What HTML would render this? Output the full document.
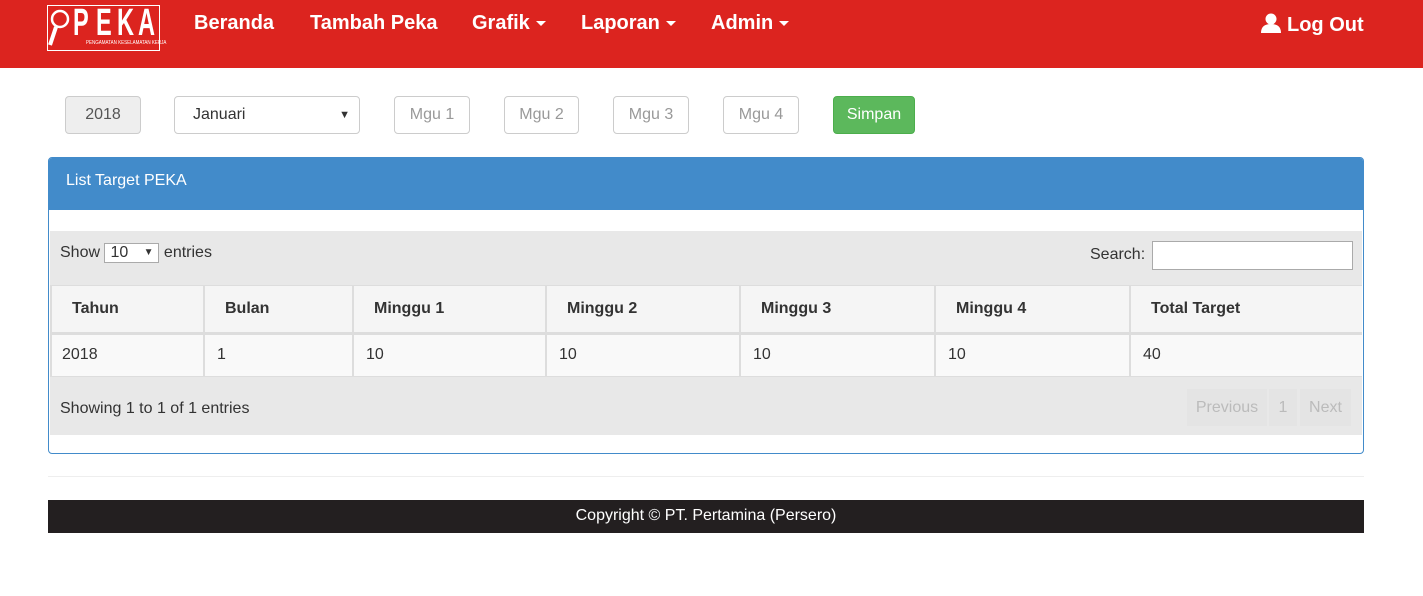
<!DOCTYPE html>
<html><head><meta charset="utf-8">
<style>
*{box-sizing:border-box;margin:0;padding:0}
body{width:1423px;height:596px;background:#fff;font-family:"Liberation Sans",Arial,sans-serif;font-size:16px;color:#333;position:relative;overflow:hidden}
.a{position:absolute}
.nav{left:0;top:0;width:1423px;height:68px;background:#dc241f}
.nl{color:#fff;font-weight:bold;font-size:20px;top:12px}
.car{display:inline-block;width:0;height:0;border-left:5px solid transparent;border-right:5px solid transparent;border-top:5px solid #fff;vertical-align:middle;margin-left:6px}
.in{height:38px;border:1px solid #ccc;border-radius:4px;font-size:16px;line-height:36px;color:#999;text-align:center;top:96px}
.grey{background:#e8e8e8}
.th{top:286px;height:46px;background:#f5f5f5;border-right:2px solid #ddd;font-weight:bold;line-height:46px;padding-left:20px}
.td{top:335px;height:41px;background:#f9f9f9;border-right:2px solid #ddd;line-height:40px;padding-left:12px}
.L{position:absolute;top:5px;color:#fff;font-weight:bold;font-size:38px;line-height:36px;transform:scaleX(.62);transform-origin:left}
</style></head><body>
<div class="a nav"></div>
<div class="a" style="left:47px;top:5px;width:113px;height:46px;border:1px solid #fff"></div>
<svg class="a" style="left:46px;top:8px" width="26" height="40" viewBox="0 0 26 40"><circle cx="14" cy="11" r="8" fill="none" stroke="#fff" stroke-width="2.5"/><line x1="10" y1="19" x2="4" y2="37" stroke="#fff" stroke-width="4"/></svg>
<span class="L" style="left:73px">P</span>
<span class="L" style="left:96px">E</span>
<span class="L" style="left:117px">K</span>
<span class="L" style="left:138px">A</span>
<div class="a" style="left:86px;top:40px;color:#fff;font-size:5px;white-space:nowrap;transform:scaleX(.9);transform-origin:left">PENGAMATAN KESELAMATAN KERJA</div>
<div class="a nl" style="left:194px">Beranda</div>
<div class="a nl" style="left:310px">Tambah Peka</div>
<div class="a nl" style="left:472px">Grafik<span class="car"></span></div>
<div class="a nl" style="left:581px">Laporan<span class="car"></span></div>
<div class="a nl" style="left:711px">Admin<span class="car"></span></div>
<svg class="a" style="left:1260px;top:13px" width="22" height="20" viewBox="0 0 22 20"><circle cx="11" cy="6" r="5.5" fill="#fff"/><path d="M1 20 Q1 11 11 11 Q21 11 21 20Z" fill="#fff"/></svg>
<div class="a nl" style="left:1287px;top:14px">Log Out</div>

<div class="a in" style="left:65px;width:76px;background:#eee;color:#555">2018</div>
<div class="a in" style="left:174px;width:186px;color:#333;text-align:left;padding-left:18px">Januari<span style="position:absolute;right:9px;font-size:11px">▼</span></div>
<div class="a in" style="left:394px;width:76px">Mgu 1</div>
<div class="a in" style="left:504px;width:75px">Mgu 2</div>
<div class="a in" style="left:613px;width:76px">Mgu 3</div>
<div class="a in" style="left:723px;width:76px">Mgu 4</div>
<div class="a in" style="left:833px;width:82px;background:#5cb85c;border-color:#4cae4c;color:#fff">Simpan</div>

<div class="a" style="left:48px;top:157px;width:1316px;height:297px;border:1px solid #428bca;border-radius:4px;overflow:hidden">
<div style="height:52px;background:#428bca;color:#fff;padding:14px 17px;font-size:16px">List Target PEKA</div></div>
<div class="a grey" style="left:50px;top:231px;width:1312px;height:204px"></div>
<div class="a" style="left:60px;top:243px">Show <span style="display:inline-block;width:55px;height:20px;border:1px solid #aaa;background:#fff;line-height:18px;padding-left:5px;position:relative">10<span style="position:absolute;right:5px;font-size:10px">▼</span></span> entries</div>
<div class="a" style="left:1090px;top:246px">Search:</div>
<div class="a" style="left:1152px;top:241px;width:201px;height:29px;border:1px solid #aaa;background:#fff"></div>
<div class="a" style="left:50px;top:285px;width:1312px;height:92px;background:#ddd"></div>
<div class="a th" style="left:52px;width:153px">Tahun</div>
<div class="a th" style="left:205px;width:149px">Bulan</div>
<div class="a th" style="left:354px;width:193px">Minggu 1</div>
<div class="a th" style="left:547px;width:194px">Minggu 2</div>
<div class="a th" style="left:741px;width:195px">Minggu 3</div>
<div class="a th" style="left:936px;width:195px">Minggu 4</div>
<div class="a th" style="left:1131px;width:231px;border-right:0">Total Target</div>
<div class="a td" style="left:52px;width:153px;padding-left:10px">2018</div>
<div class="a td" style="left:205px;width:149px">1</div>
<div class="a td" style="left:354px;width:193px">10</div>
<div class="a td" style="left:547px;width:194px">10</div>
<div class="a td" style="left:741px;width:195px">10</div>
<div class="a td" style="left:936px;width:195px">10</div>
<div class="a td" style="left:1131px;width:231px;border-right:0">40</div>
<div class="a" style="left:60px;top:400px">Showing 1 to 1 of 1 entries</div>
<div class="a" style="left:1187px;top:389px;width:80px;height:37px;background:#e4e4e4;color:#bbb;line-height:37px;text-align:center">Previous</div>
<div class="a" style="left:1269px;top:389px;width:28px;height:37px;background:#e4e4e4;color:#bbb;line-height:37px;text-align:center">1</div>
<div class="a" style="left:1300px;top:389px;width:51px;height:37px;background:#e4e4e4;color:#bbb;line-height:37px;text-align:center">Next</div>

<div class="a" style="left:48px;top:476px;width:1316px;height:1px;background:#eee"></div>
<div class="a" style="left:48px;top:500px;width:1316px;height:33px;background:#231f20;color:#fff;text-align:center;line-height:32px">Copyright © PT. Pertamina (Persero)</div>
</body></html>
